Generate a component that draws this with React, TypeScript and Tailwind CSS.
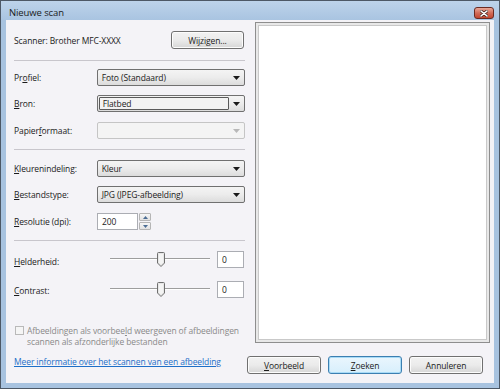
import React from 'react';

// Small accelerator-key underline helper
const U: React.FC<{ children: React.ReactNode }> = ({ children }) => <span className="underline underline-offset-[1px]">{children}</span>;

const Arrow: React.FC<{ disabled?: boolean }> = ({ disabled }) => (
  <svg width="7" height="4" viewBox="0 0 7 4" className="shrink-0">
    <path d="M0 0H7L3.5 4Z" fill={disabled ? '#b8b8b8' : '#1a1a1a'} />
  </svg>
);

const Combo: React.FC<{ value?: string; focused?: boolean; disabled?: boolean }> = ({ value, focused, disabled }) => {
  if (disabled) {
    return (
      <div className="w-[149px] h-[17px] rounded-[2px] border border-[#c5c5c5] bg-[#f4f4f4] flex items-center justify-end pr-[4px]">
        <Arrow disabled />
      </div>
    );
  }
  return (
    <div className="w-[149px] h-[17px] rounded-[2px] border border-[#707070] bg-gradient-to-b from-[#f4f4f4] via-[#ececec] to-[#dcdcdc] flex items-center p-[1px]">
      <div className={`flex-1 h-full flex items-center pl-[3px] ${focused ? 'border border-[#5a5a5a] rounded-[1px] bg-[#f3f3f3]' : ''}`}>{value}</div>
      <div className="w-[14px] flex justify-center"><Arrow /></div>
    </div>
  );
};

const Button: React.FC<{ children: React.ReactNode; focused?: boolean; className?: string }> = ({ children, focused, className }) => (
  <div
    className={`h-[18px] rounded-[3px] border flex items-center justify-center ${
      focused ? 'border-[#3c7fb1] bg-gradient-to-b from-[#eaf6fd] to-[#d7effc] shadow-[inset_0_0_0_1px_#a8dbf7]' : 'border-[#707070] bg-gradient-to-b from-[#f2f2f2] via-[#ebebeb] to-[#d6d6d6] shadow-[inset_0_0_0_1px_#fcfcfc]'
    } ${className ?? ''}`}
  >
    {children}
  </div>
);

const Row: React.FC<{ label: React.ReactNode; className?: string; children: React.ReactNode }> = ({ label, className, children }) => (
  <div className={`flex items-center ${className ?? ''}`}>
    <div className="w-[83px]">{label}</div>
    {children}
  </div>
);

const Slider: React.FC = () => (
  <div className="flex items-center">
    <div className="w-[13px]" />
    <div className="relative w-[100px] h-[15px]">
      <div className="absolute left-0 right-0 top-[6px] h-[2px] border-t border-[#9d9d9d] border-b border-b-white" />
      <svg className="absolute left-[47px] top-0" width="8" height="15" viewBox="0 0 8 15">
        <path d="M1.5 0.5H6.5A1 1 0 0 1 7.5 1.5V11L4 14.5L0.5 11V1.5A1 1 0 0 1 1.5 0.5Z" fill="#e6e6e6" stroke="#6f6f6f" />
        <path d="M2 2H6V10.5L4 12.5L2 10.5Z" fill="#f4f4f4" />
      </svg>
    </div>
    <div className="ml-[7px] w-[27px] h-[17px] bg-white border border-[#abadb3] flex items-center pl-[4px]">0</div>
  </div>
);

export default function App() {
  return (
    <div className="w-[500px] h-[389px] bg-[#a8c3e0] border border-[#4d5866] flex flex-col font-['Open_Sans',sans-serif] text-[8.5px] tracking-[-0.1px] leading-[11px] text-[#1b1b1b] overflow-hidden">
      {/* Title bar */}
      <div className="h-[19px] flex items-end justify-between pl-[8px] pr-[5px] pb-[1px] bg-gradient-to-b from-[#bdd3ea] to-[#a9c4e1]">
        <span className="text-[9.5px] mb-[1px]">Nieuwe scan</span>
        <div className="w-[20px] h-[12px] rounded-[3px] border border-[#6b2b22] bg-gradient-to-b from-[#e9a797] via-[#d16b58] to-[#c2452f] flex items-center justify-center">
          <svg width="8" height="7" viewBox="0 0 8 7">
            <path d="M1 1L7 6M7 1L1 6" stroke="#4a2a26" strokeWidth="3" strokeLinecap="round" />
            <path d="M1 1L7 6M7 1L1 6" stroke="#ffffff" strokeWidth="1.6" strokeLinecap="round" />
          </svg>
        </div>
      </div>

      {/* Content */}
      <div className="flex-1 mx-[5px] mb-[5px] bg-[#f4f3f7] flex flex-col">
        <div className="flex">
          {/* Left: settings */}
          <div className="w-[244px] pl-[8px] pr-[5px] flex flex-col">
            <div className="mt-[11px] flex items-center justify-between">
              <span>Scanner: Brother MFC-XXXX</span>
              <Button className="w-[73px] mr-[1px]">Wi<U>j</U>zigen...</Button>
            </div>
            <div className="mt-[11px] h-px bg-[#c8c6cc]" />
            <Row className="mt-[8px]" label={<>Pr<U>o</U>fiel:</>}><Combo value="Foto (Standaard)" /></Row>
            <Row className="mt-[9px]" label={<><U>B</U>ron:</>}><Combo value="Flatbed" focused /></Row>
            <Row className="mt-[10px]" label={<>Papier<U>f</U>ormaat:</>}><Combo disabled /></Row>
            <div className="mt-[10px] h-px bg-[#c8c6cc]" />
            <Row className="mt-[10px]" label={<><U>K</U>leurenindeling:</>}><Combo value="Kleur" /></Row>
            <Row className="mt-[9px]" label={<><U>B</U>estandstype:</>}><Combo value="JPG (JPEG-afbeelding)" /></Row>
            <Row className="mt-[10px]" label={<><U>R</U>esolutie (dpi):</>}>
              <div className="flex h-[17px]">
                <div className="w-[41px] bg-white border border-[#abadb3] flex items-center pl-[4px]">200</div>
                <div className="w-[12px] ml-[1px] flex flex-col gap-px">
                  <div className="flex-1 rounded-[1px] border border-[#b5b5b5] bg-gradient-to-b from-[#f6f6f6] to-[#e2e2e2] flex items-center justify-center">
                    <svg width="5" height="3" viewBox="0 0 5 3"><path d="M0 3H5L2.5 0Z" fill="#4c6d94" /></svg>
                  </div>
                  <div className="flex-1 rounded-[1px] border border-[#b5b5b5] bg-gradient-to-b from-[#f6f6f6] to-[#e2e2e2] flex items-center justify-center">
                    <svg width="5" height="3" viewBox="0 0 5 3"><path d="M0 0H5L2.5 3Z" fill="#4c6d94" /></svg>
                  </div>
                </div>
              </div>
            </Row>
            <div className="mt-[10px] h-px bg-[#c8c6cc]" />
            <Row className="mt-[10px]" label={<span className="relative top-[2px]"><U>H</U>elderheid:</span>}><Slider /></Row>
            <Row className="mt-[13px]" label={<span className="relative top-[1px]"><U>C</U>ontrast:</span>}><Slider /></Row>
            <div className="mt-[27px] flex items-start text-[#8a8a8a] whitespace-nowrap">
              <div className="mt-[1px] ml-[1px] w-[9px] h-[9px] border border-[#b9b9b9] bg-[#f5f5f5] shrink-0" />
              <div className="ml-[3px]">
                Afbeeldingen als voorbee<U>l</U>d weergeven of afbeeldingen
                <br />
                scannen als afzonderlijke bestanden
              </div>
            </div>
          </div>

          {/* Right: preview area */}
          <div className="flex-1 pl-[5px] pr-[4px] pt-[2px]">
            <div className="h-[321px] border border-[#8e8e8e] p-[2px] bg-[#e8e8e8]">
              <div className="w-full h-full bg-white border border-[#c9c9c9]" />
            </div>
          </div>
        </div>

        {/* Bottom row */}
        <div className="mt-[9px] flex items-start pl-[8px] pr-[11px]">
          <a className="text-[#1e6fc8] underline">Meer informatie over het scannen van een afbeelding</a>
          <div className="ml-auto flex gap-[7px]">
            <Button className="w-[74px]"><U>V</U>oorbeeld</Button>
            <Button className="w-[74px]" focused><U>Z</U>oeken</Button>
            <Button className="w-[74px]">Annuleren</Button>
          </div>
        </div>
      </div>
    </div>
  );
}
